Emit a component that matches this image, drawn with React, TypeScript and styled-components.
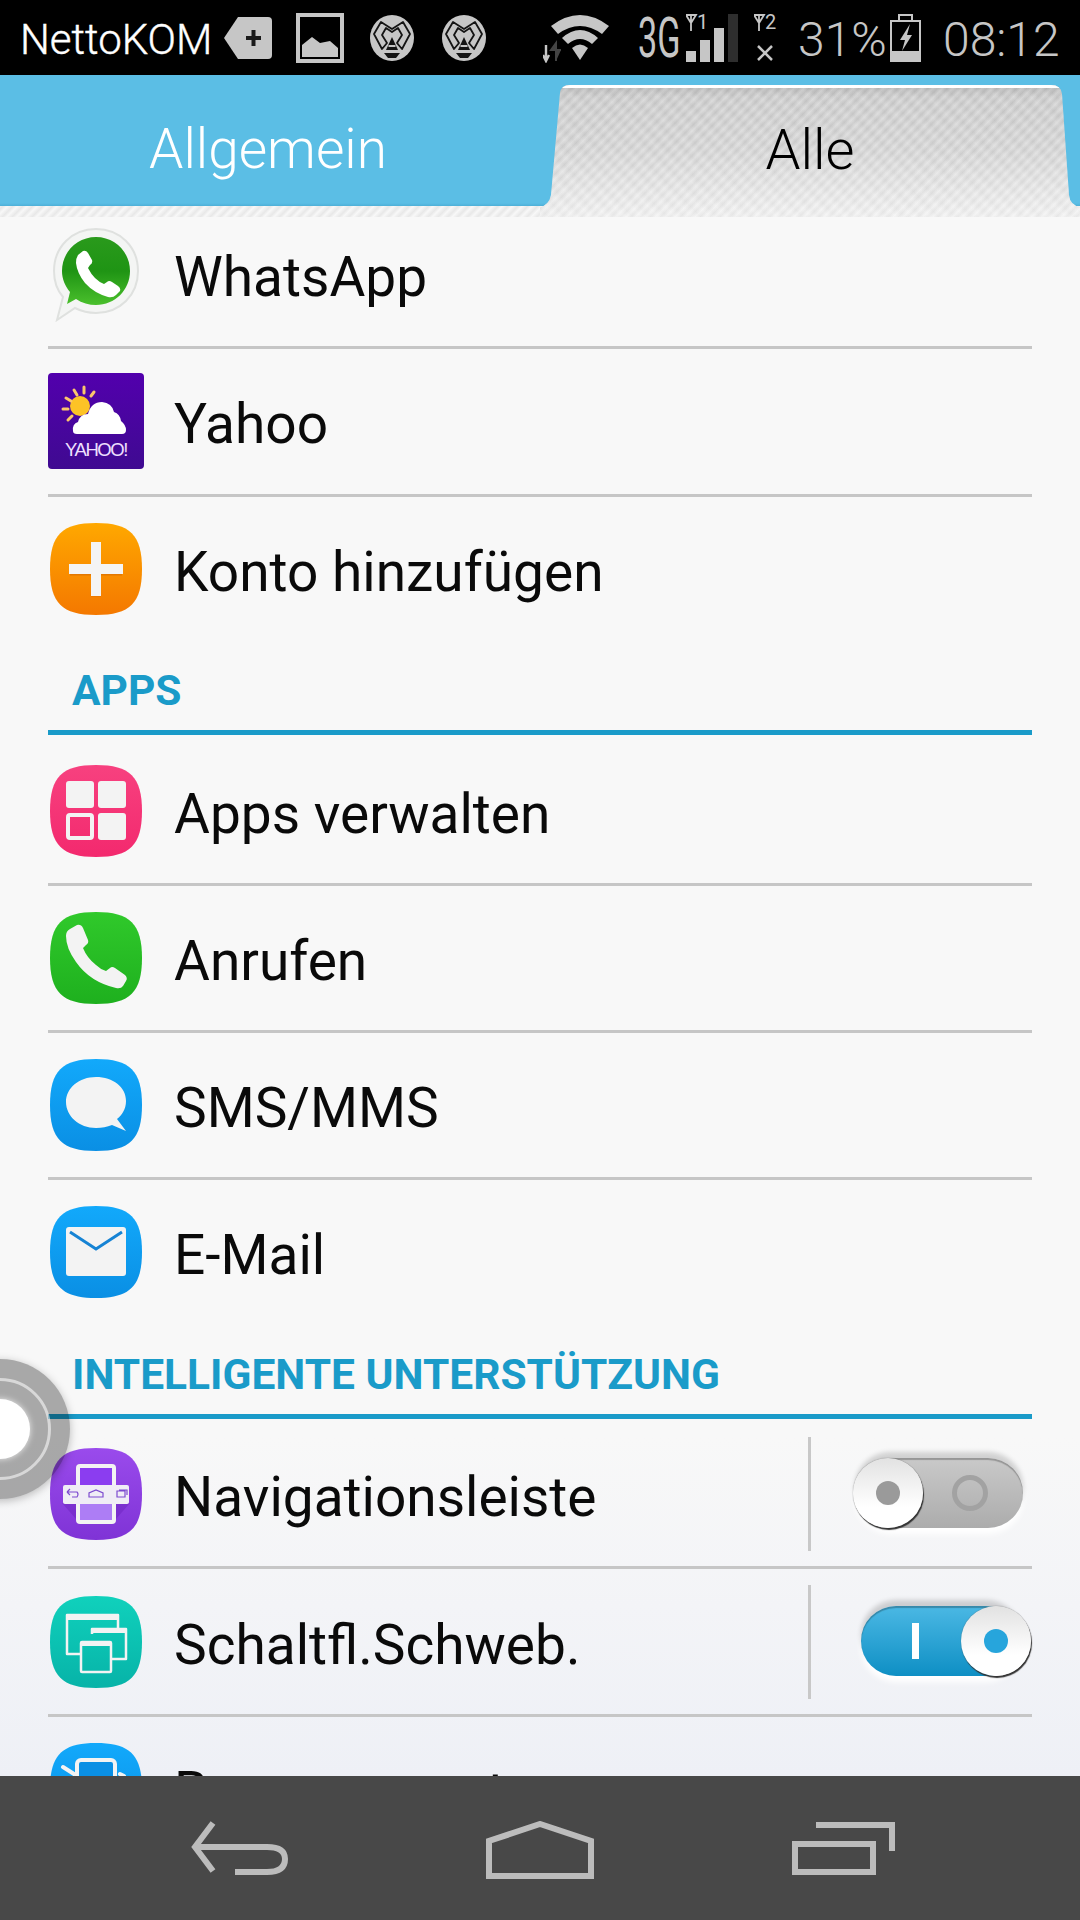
import React from 'react'
import styled, { createGlobalStyle } from 'styled-components'

const Global = createGlobalStyle`
  html, body { margin: 0; padding: 0; background: #000; }
  * { box-sizing: border-box; }
`

const Screen = styled.div`
  position: relative;
  width: 1080px;
  height: 1920px;
  display: flex;
  flex-direction: column;
  overflow: hidden;
  font-family: Roboto, 'Liberation Sans', sans-serif;
`

/* status bar */
const StatusBar = styled.div`
  height: 75px;
  flex: none;
  background: #000;
  display: flex;
  align-items: center;
  padding-left: 20px;
  color: #c6c6c6;
`
const Carrier = styled.span`
  width: 191px;
  margin-top: 3px;
  font-size: 42px;
  font-weight: 300;
  color: #fff;
  white-space: nowrap;
  -webkit-text-stroke: 0.4px #fff;
`
const StatusIcon = styled.svg<{ $ml: number }>`
  flex: none;
  display: block;
  margin-left: ${p => p.$ml}px;
`
const NetType = styled.span`
  width: 43px;
  margin-left: 28px;
  font-size: 55px;
  font-weight: 400;
  transform: scaleX(0.62);
  transform-origin: left center;
  white-space: nowrap;
`
const Percent = styled.span`
  width: 86px;
  margin: 3px 0 0 16px;
  font-size: 48px;
  font-weight: 300;
  white-space: nowrap;
`
const Clock = styled.span`
  margin: 3px 0 0 22px;
  font-size: 48px;
  font-weight: 300;
  white-space: nowrap;
`

/* tabs */
const TabBar = styled.div`
  height: 142px;
  flex: none;
  display: grid;
  grid-template-columns: 540px 540px;
  background:
    linear-gradient(#5bbee5, #5bbee5 128px, #4eb0d8 131px, transparent 131px),
    repeating-linear-gradient(135deg, #f8f8f8 0, #e8e8e8 4px, #f8f8f8 7px);
`
const PlainTab = styled.div`
  height: 131px;
  padding: 17px 4px 0 0;
  display: flex;
  align-items: center;
  justify-content: center;
  font-size: 55px;
  font-weight: 300;
  color: #fff;
`
const ActiveTab = styled.div`
  margin-top: 10px;
  height: 132px;
  padding-bottom: 3px;
  display: flex;
  align-items: center;
  justify-content: center;
  font-size: 56px;
  font-weight: 300;
  color: #000;
  clip-path: path('M20 8 Q21 0 30 0 L511 0 Q521 0 522 9 L529 110 Q530 120 540 122 L540 132 L0 132 L0 122 Q9 120 11 110 Z');
  background:
    linear-gradient(#ffffff 0 3px, rgba(255, 255, 255, 0) 3px),
    linear-gradient(rgba(0, 0, 0, 0.1), rgba(0, 0, 0, 0) 12px),
    repeating-linear-gradient(135deg, rgba(255, 255, 255, 0.22) 0, rgba(0, 0, 0, 0.03) 3.5px, rgba(255, 255, 255, 0.22) 7px),
    repeating-linear-gradient(45deg, rgba(255, 255, 255, 0.12) 0, rgba(0, 0, 0, 0.02) 6px, rgba(255, 255, 255, 0.12) 12px),
    linear-gradient(#cacaca, #d6d6d6 50%, #f3f3f3 100%);
`

/* list */
const Scroller = styled.div`
  flex: 1;
  min-height: 0;
  overflow: hidden;
  background: linear-gradient(#f8f8f8, #f8f8f8 1220px, #eef0f6 100%);
`
const List = styled.div`
  margin: -15px 48px 0;
  display: flex;
  flex-direction: column;
`
const Row = styled.div<{ $last?: boolean }>`
  height: 147.3px;
  flex: none;
  display: flex;
  align-items: center;
  padding-bottom: ${p => (p.$last ? 3 : 0)}px;
  border-bottom: ${p => (p.$last ? 'none' : '3px solid #c6c6c6')};
`
const IconSlot = styled.div`
  width: 96px;
  height: 96px;
  flex: none;
  display: flex;
  align-items: center;
  justify-content: center;
`
const Label = styled.span`
  margin: 6px 0 0 30px;
  flex: 1;
  font-size: 55px;
  color: #0a0a0a;
  white-space: nowrap;
`
const SectionHeader = styled.div`
  height: 91.5px;
  margin-bottom: 3px;
  padding: 0 0 15px 24px;
  display: flex;
  align-items: flex-end;
  font-size: 42.5px;
  font-weight: 700;
  line-height: 48px;
  color: #1a9bc9;
  border-bottom: 5px solid #1a9bc9;
  white-space: nowrap;
`

/* switch */
const SwitchCell = styled.div`
  width: 224px;
  height: 114px;
  flex: none;
  align-self: center;
  border-left: 3px solid #c8c8c8;
  position: relative;
`
const Track = styled.div<{ $on: boolean }>`
  position: absolute;
  top: 21px;
  left: ${p => (p.$on ? 50 : 44)}px;
  width: ${p => (p.$on ? 160 : 168)}px;
  height: 70px;
  border-radius: 35px;
  background: ${p =>
    p.$on ? 'linear-gradient(#4bb8e4, #0e8fc4)' : 'linear-gradient(#c9c9c9, #acacac)'};
  box-shadow: 0 -6px 5px rgba(0, 0, 0, 0.16), 0 6px 6px #fff, inset 0 2px 1px rgba(0, 0, 0, 0.25);
`
const TrackBar = styled.div`
  position: absolute;
  left: 51px;
  top: 17px;
  width: 7px;
  height: 36px;
  background: #fff;
`
const TrackRing = styled.div`
  position: absolute;
  left: 97px;
  top: 17px;
  width: 36px;
  height: 36px;
  border-radius: 50%;
  border: 5px solid #a2a2a2;
`
const Knob = styled.div<{ $on: boolean }>`
  position: absolute;
  top: 21px;
  left: ${p => (p.$on ? 150 : 42)}px;
  width: 70px;
  height: 70px;
  border-radius: 50%;
  background: linear-gradient(#e2e2e2, #ffffff 70%);
  box-shadow: 1px 2px 1px #333, 0 0 1px #555;
  display: flex;
  align-items: center;
  justify-content: center;
  &::after {
    content: '';
    width: 24px;
    height: 24px;
    border-radius: 50%;
    background: ${p => (p.$on ? '#27a5dc' : '#9a9a9a')};
  }
`

/* assistive touch ring over the list */
const FloatRing = styled.div`
  position: absolute;
  left: -70px;
  top: 1359px;
  width: 140px;
  height: 140px;
  border-radius: 50%;
  background: rgba(0, 0, 0, 0.32);
  box-shadow: 0 2px 8px rgba(0, 0, 0, 0.25);
  display: flex;
  align-items: center;
  justify-content: center;
`
const FloatRingLine = styled.div`
  width: 102px;
  height: 102px;
  border-radius: 50%;
  border: 3px solid rgba(255, 255, 255, 0.55);
  display: flex;
  align-items: center;
  justify-content: center;
`
const FloatRingCore = styled.div`
  width: 60px;
  height: 60px;
  border-radius: 50%;
  background: #fff;
  box-shadow: 0 0 6px rgba(255, 255, 255, 0.8);
`

/* nav */
const NavBar = styled.div`
  height: 144px;
  flex: none;
  background: #484848;
  display: flex;
  align-items: flex-start;
  padding-top: 45px;
  padding-left: 191px;
`
const NavIcon = styled.svg<{ $ml?: number }>`
  display: block;
  flex: none;
  margin-left: ${p => p.$ml ?? 0}px;
`

const SQUIRCLE = 'M46 0C80 0 92 12 92 46C92 80 80 92 46 92C12 92 0 80 0 46C0 12 12 0 46 0Z'

function Squircle({ id, top, bottom, children }: { id: string; top: string; bottom: string; children: React.ReactNode }) {
  return (
    <svg width="92" height="92" viewBox="0 0 92 92">
      <defs>
        <linearGradient id={id} x1="0" y1="0" x2="0" y2="1">
          <stop offset="0" stopColor={top} />
          <stop offset="1" stopColor={bottom} />
        </linearGradient>
      </defs>
      <path d={SQUIRCLE} fill={`url(#${id})`} />
      {children}
    </svg>
  )
}

const WhatsAppIcon = () => (
  <svg width="96" height="96" viewBox="0 -1 96 96">
    <defs>
      <linearGradient id="wa" x1="0" y1="0" x2="0" y2="1">
        <stop offset="0" stopColor="#2a9a1c" />
        <stop offset="0.5" stopColor="#1f9414" />
        <stop offset="1" stopColor="#4ac02c" />
      </linearGradient>
    </defs>
    <path d="M48 2C72 2 90 20 90 44C90 68 72 86 48 86C40 86 33 84 27 81L9 93L15 70C9 63 6 54 6 44C6 20 24 2 48 2Z" fill="#f4f5f4" stroke="#dfe1df" strokeWidth="2" />
    <path d="M48 10C67 10 82 25 82 44C82 63 67 78 48 78C41 78 34 76 28 72L19 77L22 65C17 59 14 52 14 44C14 25 29 10 48 10Z" fill="url(#wa)" />
    <path d="M30 28L35 24Q38 23 40 26L44 33Q45 36 42 38L40 41Q43 47 47 51Q51 55 56 57L59 55Q61 53 64 55L70 59Q73 61 72 64L68 68Q65 71 60 70Q46 66 37 56Q29 46 28 36Q28 31 30 28Z" fill="#fff" />
  </svg>
)

const YahooIcon = () => (
  <svg width="96" height="96" viewBox="0 0 96 96">
    <defs>
      <linearGradient id="yh" x1="0" y1="0" x2="0" y2="1">
        <stop offset="0" stopColor="#5200ad" />
        <stop offset="1" stopColor="#3f0a91" />
      </linearGradient>
    </defs>
    <rect width="96" height="96" rx="4" fill="url(#yh)" />
    <circle cx="32" cy="33" r="10" fill="#fdc326" />
    <g stroke="#fbc66c" strokeWidth="3" strokeLinecap="round">
      <path d="M18 25L23 28M26 17L29 22M36 14L36 20M46 19L43 23M15 36L20 36M20 47L24 43" />
    </g>
    <path d="M25 58Q24 51 30 49Q32 41 40 41Q43 29 54 29Q64 30 66 39Q72 41 73 48Q78 52 78 57Q78 61 74 61L29 61Q25 61 25 58Z" fill="#fff" />
    <text x="48" y="83" textAnchor="middle" fontFamily="'Liberation Sans', sans-serif" fontSize="18.5" letterSpacing="-1.4" fill="#efe0ff">YAHOO!</text>
  </svg>
)

const AddIcon = () => (
  <Squircle id="add" top="#ffa800" bottom="#f47800">
    <path d="M41 20H51V41H72V51H51V72H41V51H20V41H41Z" fill="#c96000" opacity="0.45" transform="translate(0 1.5)" />
    <path d="M41 19H51V41H73V51H51V73H41V51H19V41H41Z" fill="#f4f4f4" />
  </Squircle>
)

const AppsIcon = () => (
  <Squircle id="app" top="#f7417f" bottom="#f3296e">
    <rect x="16" y="16" width="28" height="27" rx="3" fill="#f3f3f3" />
    <rect x="48" y="16" width="28" height="27" rx="3" fill="#f3f3f3" />
    <rect x="48" y="48" width="28" height="27" rx="3" fill="#f3f3f3" />
    <rect x="18" y="50" width="24" height="23" rx="2" fill="none" stroke="#f3f3f3" strokeWidth="4" />
  </Squircle>
)

const PhoneIcon = () => (
  <Squircle id="ph" top="#30c92b" bottom="#1eb01e">
    <path d="M20 17L27 13Q31 12 33 16L38 28Q39 31 36 33L33 36Q37 46 46 53Q50 57 56 59L60 56Q62 54 65 56L75 63Q78 66 76 69L73 74Q71 77 66 76Q40 70 26 50Q16 36 16 24Q16 19 20 17Z" fill="#f3f3f3" />
  </Squircle>
)

const SmsIcon = () => (
  <Squircle id="sms" top="#12a9fb" bottom="#0a8fe4">
    <path d="M46 18C63 18 76 28 76 42C76 50 72 56 67 60L76 72L62 66C57 68 52 69 46 69C29 69 16 57 16 43C16 29 29 18 46 18Z" fill="#f3f3f3" />
  </Squircle>
)

const MailIcon = () => (
  <Squircle id="mail" top="#12a9fb" bottom="#0a8fe4">
    <rect x="16" y="21" width="60" height="49" rx="3" fill="#f3f3f3" />
    <path d="M20 26L46 43L72 26" fill="none" stroke="#1683d4" strokeWidth="3" />
  </Squircle>
)

const NavLeisteIcon = () => (
  <Squircle id="nv" top="#9a4bec" bottom="#7f33d6">
    <path d="M12 55L26 71H66L80 55Z" fill="#6a22bd" opacity="0.45" />
    <rect x="26" y="16" width="40" height="60" rx="4" fill="#f3f3f3" />
    <rect x="30" y="20" width="32" height="17" fill="#8b3df0" />
    <rect x="30" y="54" width="32" height="18" fill="#ad7df5" />
    <rect x="13" y="37" width="66" height="19" rx="2" fill="#f0edf6" />
    <path d="M17 44H27Q29 46 27 49H22M17 44L20 41M17 44L20 47" fill="none" stroke="#7d4bcf" strokeWidth="1.2" />
    <path d="M39 49V45L46 42L53 45V49Z" fill="none" stroke="#7d4bcf" strokeWidth="1.2" />
    <path d="M67 49H75V43H67ZM69 42H77V47" fill="none" stroke="#7d4bcf" strokeWidth="1.2" />
  </Squircle>
)

const FloatWinIcon = () => (
  <Squircle id="sw" top="#10d1bc" bottom="#07b3a8">
    <g fill="none" stroke="#f3f3f3" strokeWidth="2.5" strokeLinejoin="round">
      <path d="M30 58H17V19H68V32" />
      <path d="M42 38V33H76V63H62" />
      <rect x="31" y="46" width="30" height="30" rx="1" />
    </g>
    <path d="M18 20H67V24H18ZM43 34H75V37H43ZM32 47H60V50H32Z" fill="#f3f3f3" />
  </Squircle>
)

const MotionIcon = () => (
  <Squircle id="mo" top="#12a9fb" bottom="#0a8fe4">
    <rect x="27" y="17" width="38" height="60" rx="4" fill="#0a8fe4" stroke="#f3f3f3" strokeWidth="4" />
    <path d="M13 24L24 31" stroke="#f3f3f3" strokeWidth="4" strokeLinecap="round" />
    <path d="M70 31L74 33" stroke="#f3f3f3" strokeWidth="4" strokeLinecap="round" />
  </Squircle>
)

const LogoBadge = ({ ml }: { ml: number }) => (
  <StatusIcon $ml={ml} width="44" height="46" viewBox="0 0 44 46">
    <ellipse cx="22" cy="23" rx="22" ry="23" fill="#c6c6c6" />
    <path d="M11 7L22 14L33 7L40 19L32 34L27 28L32 20L28 13L22 17L16 13L12 20L17 28L12 34L4 19Z" fill="none" stroke="#141414" strokeWidth="1.8" strokeLinejoin="round" />
    <path d="M22 22L28 35H16Z" fill="#141414" />
    <path d="M18.5 31H25.5" stroke="#c6c6c6" strokeWidth="2" />
    <path d="M14 38H30L26 43H18Z" fill="#141414" />
  </StatusIcon>
)

function StatusIcons() {
  return (
    <>
      <StatusIcon $ml={13} width="48" height="42" viewBox="0 0 48 42">
        <path d="M14 0H44Q48 0 48 4V38Q48 42 44 42H14L0 21Z" fill="#c6c6c6" />
        <path d="M22 21H37M29.5 13V29" stroke="#1a1a1a" strokeWidth="4" />
      </StatusIcon>
      <StatusIcon $ml={24} width="48" height="50" viewBox="0 0 48 50">
        <rect x="2" y="2" width="44" height="46" fill="none" stroke="#c6c6c6" strokeWidth="4" />
        <path d="M6 44V32L16 24L24 30L34 28L42 35V44Z" fill="#c6c6c6" />
      </StatusIcon>
      <LogoBadge ml={26} />
      <LogoBadge ml={28} />
      <StatusIcon $ml={57} width="67" height="50" viewBox="0 0 67 50">
        <path d="M3 32V48M0 42L3 48L6 42" fill="none" stroke="#c6c6c6" strokeWidth="2.4" />
        <path d="M13 48V30L8 37H18" fill="#444" stroke="#444" strokeWidth="2" />
        <path d="M8 13Q37 -9 66 13L59 21Q37 5 15 21Z" fill="#c6c6c6" />
        <path d="M19 25Q37 9 55 25L49 31Q37 21 25 31Z" fill="#c6c6c6" />
        <path d="M29 35Q37 28 45 35L37 47Z" fill="#c6c6c6" />
      </StatusIcon>
      <NetType>3G</NetType>
      <StatusIcon $ml={5} width="52" height="48" viewBox="0 0 52 48">
        <path d="M0 1L5 9L10 1ZM5 1V17" fill="none" stroke="#c6c6c6" strokeWidth="1.8" />
        <text x="11" y="15" fontFamily="Roboto, sans-serif" fontSize="20" fill="#c6c6c6">1</text>
        <rect x="0" y="37" width="10" height="11" fill="#c6c6c6" />
        <rect x="14" y="26" width="10" height="22" fill="#c6c6c6" />
        <rect x="28" y="14" width="10" height="34" fill="#c6c6c6" />
        <rect x="42" y="0" width="10" height="48" fill="#2e2e2e" />
      </StatusIcon>
      <StatusIcon $ml={16} width="28" height="48" viewBox="0 0 28 48">
        <path d="M0 1L5 9L10 1ZM5 1V17" fill="none" stroke="#c6c6c6" strokeWidth="1.8" />
        <text x="11" y="15" fontFamily="Roboto, sans-serif" fontSize="20" fill="#c6c6c6">2</text>
        <path d="M4 32L18 46M18 32L4 46" stroke="#c6c6c6" strokeWidth="2.5" />
      </StatusIcon>
      <Percent>31%</Percent>
      <StatusIcon $ml={6} width="31" height="48" viewBox="0 0 31 48">
        <path d="M9 7V1H22V7M1 7H30V47H1Z" fill="none" stroke="#c6c6c6" strokeWidth="2" />
        <rect x="1" y="37" width="29" height="10" fill="#c6c6c6" />
        <path d="M20 10L10 26H15L12 37L22 21H17Z" fill="#c6c6c6" />
      </StatusIcon>
      <Clock>08:12</Clock>
    </>
  )
}

function Switch({ on }: { on: boolean }) {
  return (
    <SwitchCell>
      <Track $on={on}>{on ? <TrackBar /> : <TrackRing />}</Track>
      <Knob $on={on} />
    </SwitchCell>
  )
}

export default function App() {
  return (
    <Screen>
      <Global />
      <StatusBar>
        <Carrier>NettoKOM</Carrier>
        <StatusIcons />
      </StatusBar>
      <TabBar>
        <PlainTab>Allgemein</PlainTab>
        <ActiveTab>Alle</ActiveTab>
      </TabBar>
      <Scroller>
        <List>
          <Row><IconSlot><WhatsAppIcon /></IconSlot><Label>WhatsApp</Label></Row>
          <Row><IconSlot><YahooIcon /></IconSlot><Label>Yahoo</Label></Row>
          <Row $last><IconSlot><AddIcon /></IconSlot><Label>Konto hinzufügen</Label></Row>
          <SectionHeader>APPS</SectionHeader>
          <Row><IconSlot><AppsIcon /></IconSlot><Label>Apps verwalten</Label></Row>
          <Row><IconSlot><PhoneIcon /></IconSlot><Label>Anrufen</Label></Row>
          <Row><IconSlot><SmsIcon /></IconSlot><Label>SMS/MMS</Label></Row>
          <Row $last><IconSlot><MailIcon /></IconSlot><Label>E-Mail</Label></Row>
          <SectionHeader>INTELLIGENTE UNTERSTÜTZUNG</SectionHeader>
          <Row><IconSlot><NavLeisteIcon /></IconSlot><Label>Navigationsleiste</Label><Switch on={false} /></Row>
          <Row><IconSlot><FloatWinIcon /></IconSlot><Label>Schaltfl.Schweb.</Label><Switch on /></Row>
          <Row><IconSlot><MotionIcon /></IconSlot><Label>Bewegungssteuerung</Label></Row>
        </List>
      </Scroller>
      <NavBar>
        <NavIcon width="98" height="54" viewBox="0 0 98 54">
          <path d="M22 2L4 26L22 50M5 26H76Q94 26 94 38Q94 51 76 51H44" fill="none" stroke="#bcbcbc" strokeWidth="6" />
        </NavIcon>
        <NavIcon $ml={197} width="108" height="58" viewBox="0 0 108 58">
          <path d="M3 55V20L54 3L105 20V55Z" fill="none" stroke="#bcbcbc" strokeWidth="6" />
        </NavIcon>
        <NavIcon $ml={198} width="103" height="54" viewBox="0 0 103 54">
          <path d="M3 23H81V51H3Z" fill="none" stroke="#bcbcbc" strokeWidth="6" />
          <path d="M24 4H100V30" fill="none" stroke="#bcbcbc" strokeWidth="6" />
        </NavIcon>
      </NavBar>
      <FloatRing>
        <FloatRingLine>
          <FloatRingCore />
        </FloatRingLine>
      </FloatRing>
    </Screen>
  )
}
